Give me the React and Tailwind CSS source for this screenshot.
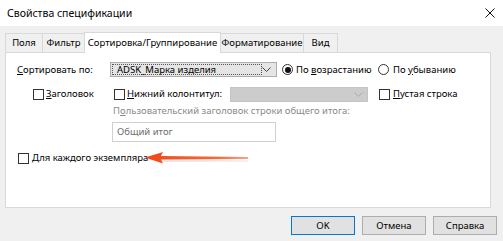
import React from "react";

const Check = ({ className = "" }) => (
  <span className={`w-[11px] h-[11px] border border-[#333] bg-white shrink-0 ${className}`} />
);

const Chevron = ({ color = "#444" }) => (
  <svg width="9" height="6" viewBox="0 0 9 6">
    <path d="M0.5 0.5 L4.5 4.5 L8.5 0.5" fill="none" stroke={color} strokeWidth="1" />
  </svg>
);

const Radio = ({ checked }) => (
  <span className="w-[11px] h-[11px] rounded-full border border-[#333] bg-white flex items-center justify-center shrink-0">
    {checked && <span className="w-[6px] h-[6px] rounded-full bg-[#111]" />}
  </span>
);

const Arrow = () => (
  <svg width="106" height="14" viewBox="0 0 106 14">
    <defs>
      <linearGradient id="ag" x1="0" x2="1" y1="0" y2="0">
        <stop offset="0" stopColor="#f2451c" />
        <stop offset="0.7" stopColor="#f66a35" />
        <stop offset="1" stopColor="#f7a58a" />
      </linearGradient>
    </defs>
    <path d="M2 8 L104 9.5 L104 10.5 L18 11 L2 8 Z" fill="#bbb" opacity="0.35" />
    <path d="M1 6.5 L19 1 L17 5 L104 6 L104 8 L17 8.5 L19 12.5 Z" fill="url(#ag)" />
  </svg>
);

const tabs = [
  { label: "Поля", w: "w-[38px]" },
  { label: "Фильтр", w: "w-[43px]" },
  { label: "Сортировка/Группирование", w: "w-[137px]", active: true },
  { label: "Форматирование", w: "w-[84px]" },
  { label: "Вид", w: "w-[35px]" },
];

export default function App() {
  return (
    <div className="w-[503px] h-[241px] bg-[#f0f0f0] text-[9.5px] leading-[14px] text-black overflow-hidden whitespace-nowrap font-['Noto_Sans',sans-serif]">
      <div className="h-[26px] bg-white flex items-center justify-between pl-[7px] pr-[8px]">
        <span className="text-[10.5px]">Свойства спецификации</span>
        <svg width="10" height="10" viewBox="0 0 10 10">
          <path d="M0.5 0.5 L9.5 9.5 M9.5 0.5 L0.5 9.5" stroke="#111" strokeWidth="1" />
        </svg>
      </div>

      <div className="px-[5px] pt-[6px] w-[496px]">
        <div className="flex items-end h-[20px]">
          {tabs.map((t) => (
            <div
              key={t.label}
              className={`${t.w} flex items-center justify-center border-t border-l border-r border-[#d9d9d9] -mr-px ${
                t.active ? "h-[21px] bg-white relative z-10 -mb-px pb-px" : "h-[19px] bg-[#f0f0f0]"
              }`}
            >
              {t.label}
            </div>
          ))}
        </div>

        <div className="h-[156px] bg-white border border-[#d9d9d9] pl-[11px]">
          <div className="flex items-center mt-[9px] h-[15px]">
            <span className="w-[93px]">
              <span className="underline">С</span>ортировать по:
            </span>
            <div className="w-[167px] h-[15px] bg-[#e5e5e5] border border-[#adadad] flex items-center pl-[1px] pr-[5px]">
              <div className="w-[150px] h-[11px] border border-dotted border-[#555] flex items-center pl-[4px] leading-none">
                ADSK_Марка изделия
              </div>
              <span className="ml-auto flex">
                <Chevron />
              </span>
            </div>
            <div className="flex items-center gap-[3px] ml-[5px] w-[96px]">
              <Radio checked />
              <span>
                По <span className="underline">в</span>озрастанию
              </span>
            </div>
            <div className="flex items-center gap-[4px]">
              <Radio />
              <span>
                По <span className="underline">у</span>быванию
              </span>
            </div>
          </div>

          <div className="flex items-start mt-[10px] h-[16px]">
            <div className="flex items-center gap-[2px] ml-[16px] w-[81px]">
              <Check />
              <span>
                <span className="underline">З</span>аголовок
              </span>
            </div>
            <div className="flex items-center gap-[2px] w-[116px]">
              <Check />
              <span>
                <span className="underline">Н</span>ижний колонтитул:
              </span>
            </div>
            <div className="w-[138px] h-[15px] bg-[#cccccc] border border-[#c4c4c4] flex items-center justify-end pr-[4px]">
              <Chevron color="#a8a8a8" />
            </div>
            <div className="flex items-center gap-[3px] ml-[11px]">
              <Check />
              <span>
                <span className="underline">П</span>устая строка
              </span>
            </div>
          </div>

          <div className="ml-[96px] mt-[1px] text-[#8a8a8a]">
            П<span className="underline">о</span>льзовательский заголовок строки общего итога:
          </div>

          <div className="ml-[95px] mt-[4px] w-[164px] h-[20px] border border-[#d0d0d0] flex items-center pl-[4px] text-[#6d6d6d]">
            Общий итог
          </div>

          <div className="flex items-center mt-[9px] h-[14px]">
            <Check className="ml-[1px]" />
            <span className="ml-[3px] w-[112px]">
              <span className="underline">Д</span>ля каждого экземпляра
            </span>
            <span className="flex">
              <Arrow />
            </span>
          </div>
        </div>
      </div>

      <div className="flex justify-end gap-[7px] pr-[6px] mt-[8px]">
        <button className="w-[64px] h-[19px] bg-[#e1e1e1] border border-[#0078d7] leading-none">OK</button>
        <button className="w-[64px] h-[19px] bg-[#e1e1e1] border border-[#adadad] leading-none">Отмена</button>
        <button className="w-[64px] h-[19px] bg-[#e1e1e1] border border-[#adadad] leading-none">Справка</button>
      </div>
    </div>
  );
}
